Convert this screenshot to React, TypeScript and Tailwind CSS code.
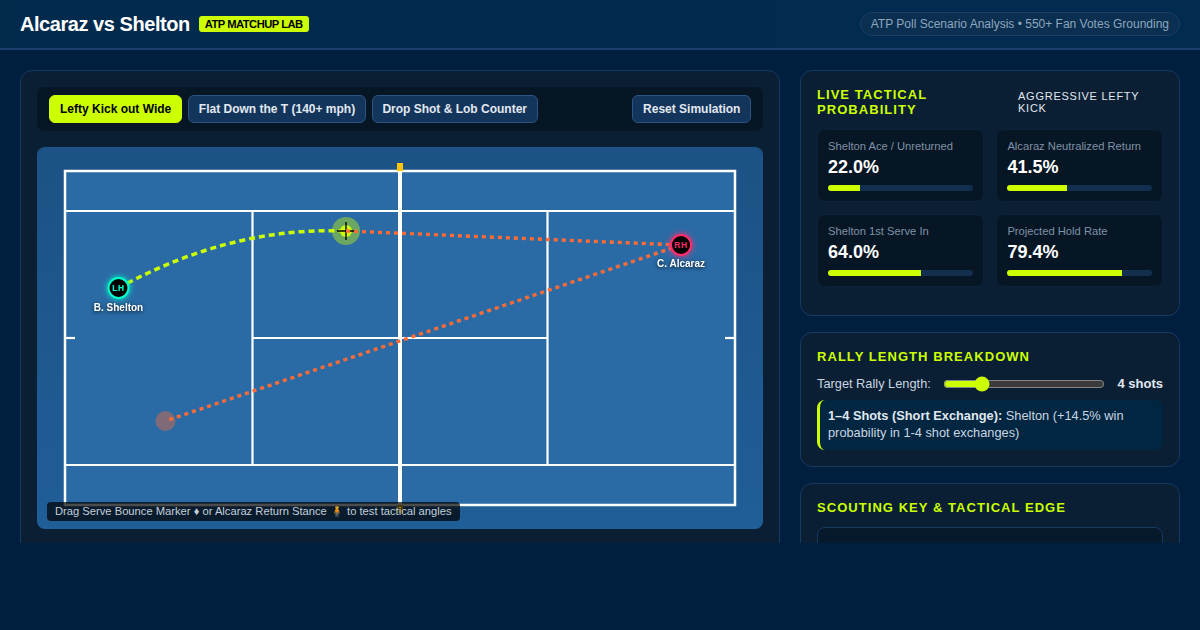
const metrics = [
  { label: 'Shelton Ace / Unreturned', value: 22 },
  { label: 'Alcaraz Neutralized Return', value: 41.5 },
  { label: 'Shelton 1st Serve In', value: 64 },
  { label: 'Projected Hold Rate', value: 79.4 },
];

const buttonClass =
  'h-7 px-[9.6px] rounded-md border border-[#2a5583] bg-[#14355b] text-xs font-bold text-[#e2e8f0] whitespace-nowrap';

function Court() {
  return (
    <div className="relative h-[382px] rounded-lg overflow-hidden bg-gradient-to-b from-[#1c5285] to-[#205e98]">
      <svg width="726" height="382" viewBox="0 0 726 382" className="block">
        <rect x="28" y="24" width="670" height="334" fill="#2a6ba6" stroke="#ffffff" strokeWidth="2.5" />
        <g stroke="#ffffff" strokeWidth="2.2" fill="none">
          <line x1="28" y1="64" x2="698" y2="64" />
          <line x1="28" y1="318" x2="698" y2="318" />
          <line x1="215.5" y1="64" x2="215.5" y2="318" />
          <line x1="510.5" y1="64" x2="510.5" y2="318" />
          <line x1="215.5" y1="191" x2="510.5" y2="191" />
          <line x1="28" y1="191" x2="38" y2="191" />
          <line x1="688" y1="191" x2="698" y2="191" />
        </g>
        <line x1="363" y1="24" x2="363" y2="358" stroke="#ffffff" strokeWidth="4" />
        <rect x="360" y="16" width="6" height="8" fill="#ffc400" />
        <rect x="360" y="358" width="6" height="8" fill="#ffc400" />

        <circle cx="128.5" cy="274" r="10" fill="#ff6b35" fillOpacity="0.4" />
        <circle cx="309" cy="84" r="14" fill="#ccff00" fillOpacity="0.4" />
        <circle cx="309" cy="84" r="6" fill="#ccff00" />

        <path
          d="M81.5 141Q195 79 309 84"
          fill="none"
          stroke="#ccff00"
          strokeWidth="3.5"
          strokeDasharray="6 4"
        />
        <path d="M309 75V93M300 84H318" stroke="#000000" strokeWidth="1.4" />
        <path
          d="M309 84L644 98L128.5 274"
          fill="none"
          stroke="#ff6b35"
          strokeWidth="3.4"
          strokeDasharray="4 4"
        />

        <g style={{ filter: 'drop-shadow(0 0 3px #00ffcc)' }}>
          <circle cx="81.5" cy="141" r="10" fill="#000000" stroke="#00ffcc" strokeWidth="2" />
        </g>
        <text x="81.5" y="144" textAnchor="middle" fontSize="8.5" fontWeight="700" letterSpacing="0.5" fill="#00ffcc">
          LH
        </text>
        <text
          x="81.5"
          y="164"
          textAnchor="middle"
          fontSize="10"
          fontWeight="700"
          fill="#ffffff"
          style={{ filter: 'drop-shadow(0 1px 2px rgba(0,0,0,0.8))' }}
        >
          B. Shelton
        </text>

        <g style={{ filter: 'drop-shadow(0 0 3px #ff2d6b)' }}>
          <circle cx="644" cy="98" r="10" fill="#000000" stroke="#ff2d6b" strokeWidth="2" />
        </g>
        <text x="644" y="101" textAnchor="middle" fontSize="8.5" fontWeight="700" letterSpacing="0.5" fill="#ff2d6b">
          RH
        </text>
        <text
          x="644"
          y="120"
          textAnchor="middle"
          fontSize="10"
          fontWeight="700"
          fill="#ffffff"
          style={{ filter: 'drop-shadow(0 1px 2px rgba(0,0,0,0.8))' }}
        >
          C. Alcaraz
        </text>
      </svg>
      <div className="absolute left-[10px] bottom-2 rounded bg-black/70 px-2 py-[2px] text-[11.2px] leading-[15px] text-[#c3cfdb] whitespace-nowrap">
        Drag Serve Bounce Marker ♦ or Alcaraz Return Stance 🧍 to test tactical angles
      </div>
    </div>
  );
}

export default function App() {
  return (
    <div className="h-[630px] w-[1200px] overflow-hidden bg-[#001f3f] font-['Liberation_Sans',Arial,sans-serif]">
      <header className="h-[50px] px-5 flex items-center justify-between border-b-2 border-[#1a3f6b] bg-gradient-to-r from-[#012a4d] to-[#012c50]">
        <div className="flex items-center gap-[9px]">
          <h1 className="text-xl font-bold tracking-[-0.45px] text-white">Alcaraz vs Shelton</h1>
          <span className="h-4 px-[6px] rounded-[3px] bg-[#ccff00] text-[11.2px] leading-4 font-bold tracking-[-0.5px] text-black">
            ATP MATCHUP LAB
          </span>
        </div>
        <div className="h-6 px-[10px] flex items-center rounded-full border border-[#1a3f65] bg-[#0a2f50] text-xs text-[#8fa6bd]">
          ATP Poll Scenario Analysis • 550+ Fan Votes Grounding
        </div>
      </header>

      <main className="h-[493px] overflow-hidden px-5 pt-5 grid grid-cols-[760px_380px] gap-5 items-start">
        <section className="rounded-xl border border-[#173a63] bg-[#0a1f33] p-4 h-[600px]">
          <div className="h-11 px-3 flex items-center gap-[6px] rounded-lg bg-[#061624]">
            <button className="h-7 px-[10px] rounded-md border border-[#ccff00] bg-[#ccff00] text-xs font-bold text-black whitespace-nowrap">
              Lefty Kick out Wide
            </button>
            <button className={buttonClass}>Flat Down the T (140+ mph)</button>
            <button className={buttonClass}>Drop Shot &amp; Lob Counter</button>
            <button className={`${buttonClass} ml-auto`}>Reset Simulation</button>
          </div>
          <div className="mt-4">
            <Court />
          </div>
        </section>

        <div className="flex flex-col gap-4">
          <section className="h-[246px] rounded-xl border border-[#173a63] bg-[#0a1f33] p-4">
            <div className="flex items-center justify-between">
              <h2 className="w-[160px] text-[13px] leading-[15px] font-bold tracking-[1.05px] text-[#ccff00]">
                LIVE TACTICAL PROBABILITY
              </h2>
              <span className="w-[145px] text-[11px] leading-3 tracking-[0.75px] text-[#e2e8f0]">
                AGGRESSIVE LEFTY KICK
              </span>
            </div>
            <div className="mt-3 grid grid-cols-2 gap-x-[12.8px] gap-y-3">
              {metrics.map((m) => (
                <div key={m.label} className="h-[73px] rounded-lg border border-[#0c2137] bg-[#061624] px-[10px] pt-[10px]">
                  <div className="text-[11.2px] leading-[13px] text-[#8091a7]">{m.label}</div>
                  <div className="mt-1 text-lg leading-[21px] font-bold text-white">{m.value.toFixed(1)}%</div>
                  <div className="mt-[7px] h-[6px] rounded-full bg-[#132f4f] overflow-hidden">
                    <div className="h-full bg-[#ccff00]" style={{ width: `${m.value}%` }} />
                  </div>
                </div>
              ))}
            </div>
          </section>

          <section className="h-[135px] rounded-xl border border-[#173a63] bg-[#0a1f33] p-4">
            <h2 className="text-[13px] leading-[15px] font-bold tracking-[1.05px] text-[#ccff00]">
              RALLY LENGTH BREAKDOWN
            </h2>
            <div className="mt-2 h-6 flex items-center gap-3 text-[12.8px] text-[#cbd5e1]">
              <span>Target Rally Length:</span>
              <input type="range" min={1} max={15} defaultValue={4} className="flex-1 min-w-0 accent-[#ccff00]" />
              <span className="text-[13px] font-bold text-[#e2e8f0]">4 shots</span>
            </div>
            <div className="mt-1 h-[50px] rounded-lg border-l-[3px] border-[#ccff00] bg-[#012642] px-2 py-[7px] text-[12.8px] leading-[17px] text-[#cbd5e1]">
              <strong className="text-[#e2e8f0]">1–4 Shots (Short Exchange):</strong> Shelton (+14.5% win probability in
              1-4 shot exchanges)
            </div>
          </section>

          <section className="h-[200px] rounded-xl border border-[#173a63] bg-[#0a1f33] p-4">
            <h2 className="text-[13px] leading-[15px] font-bold tracking-[1.05px] text-[#ccff00]">
              SCOUTING KEY &amp; TACTICAL EDGE
            </h2>
            <div className="mt-3 h-[100px] rounded-lg border border-[#173a63] bg-[#061a2c]" />
          </section>
        </div>
      </main>
    </div>
  );
}
